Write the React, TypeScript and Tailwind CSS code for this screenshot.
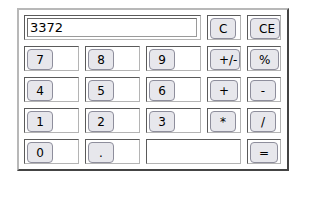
import React from 'react';

const font = { fontFamily: '"DejaVu Sans", Verdana, sans-serif' };

const Key: React.FC<{ label: string }> = ({ label }) => (
  <button className="h-[21px] min-w-[26px] px-[8px] rounded-[4px] border border-[#8e8e9c] bg-[#e7e7ec] text-[12px] leading-none text-black">
    {label}
  </button>
);

const Cell: React.FC<{ children?: React.ReactNode; className?: string }> = ({ children, className }) => (
  <div
    className={
      'h-[25px] bg-white border border-t-[#5a5a5a] border-l-[#5a5a5a] border-b-[#b4b4b4] border-r-[#b4b4b4] pl-[2px] pt-[2px] flex items-start ' +
      (className || '')
    }
  >
    {children}
  </div>
);

const rows: string[][] = [
  ['7', '8', '9', '+/-', '%'],
  ['4', '5', '6', '+', '-'],
  ['1', '2', '3', '*', '/'],
];

export default function App() {
  return (
    <div className="w-[314px] h-[202px] bg-white pt-[8px] pl-[17px]" style={font}>
      <div className="w-[272px] border-2 border-t-[#b8b8b8] border-l-[#b8b8b8] border-b-[#444444] border-r-[#444444] p-[5px] grid grid-cols-[55px_55px_55px_34px_34px] gap-[6px]">
        <Cell className="col-span-3">
          <input
            readOnly
            value="3372"
            className="w-[170px] h-[19px] border border-t-[#6a6a6a] border-l-[#6a6a6a] border-b-[#9a9a9a] border-r-[#9a9a9a] px-[2px] text-[13px] text-black outline-none"
            style={font}
          />
        </Cell>
        <Cell>
          <Key label="C" />
        </Cell>
        <Cell>
          <Key label="CE" />
        </Cell>
        {rows.map((r) =>
          r.map((k) => (
            <Cell key={k}>
              <Key label={k} />
            </Cell>
          ))
        )}
        <Cell>
          <Key label="0" />
        </Cell>
        <Cell>
          <Key label="." />
        </Cell>
        <Cell className="col-span-2" />
        <Cell>
          <Key label="=" />
        </Cell>
      </div>
    </div>
  );
}
